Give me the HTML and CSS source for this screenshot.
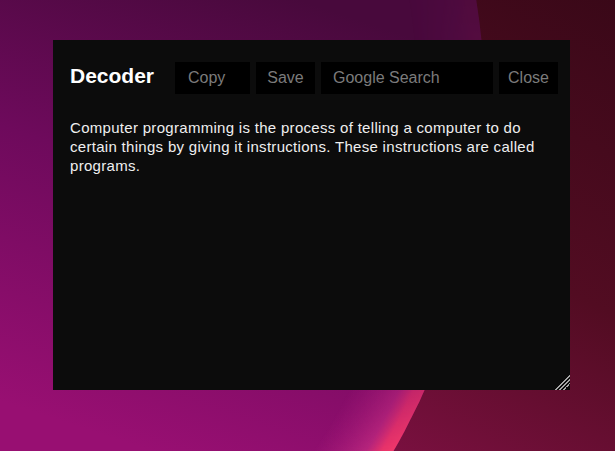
FILE: index.html
```html
<!DOCTYPE html>
<html lang="en">
<head>
<meta charset="utf-8">
<title>Decoder</title>
<link rel="stylesheet" href="styles.css">
</head>
<body>
<svg class="wallpaper" viewBox="0 0 615 451" preserveAspectRatio="none" aria-hidden="true">
  <defs>
    <linearGradient id="redBg" x1="615" y1="0" x2="380" y2="451" gradientUnits="userSpaceOnUse">
      <stop offset="0" stop-color="#3a0818"/>
      <stop offset="0.55" stop-color="#520c22"/>
      <stop offset="1" stop-color="#7a1040"/>
    </linearGradient>
    <linearGradient id="purpleBg" x1="300" y1="0" x2="150" y2="451" gradientUnits="userSpaceOnUse">
      <stop offset="0" stop-color="#48093c"/>
      <stop offset="0.45" stop-color="#6e0a5c"/>
      <stop offset="1" stop-color="#980f72"/>
    </linearGradient>
    <radialGradient id="edgeGlow" cx="-200" cy="109" r="685" gradientUnits="userSpaceOnUse">
      <stop offset="0.9" stop-color="#b02080" stop-opacity="0"/>
      <stop offset="0.965" stop-color="#c02a80" stop-opacity="0.8"/>
      <stop offset="0.985" stop-color="#e8336a" stop-opacity="1"/>
      <stop offset="1" stop-color="#f0386a" stop-opacity="1"/>
    </radialGradient>
    <linearGradient id="fadeY" x1="0" y1="0" x2="0" y2="451" gradientUnits="userSpaceOnUse">
      <stop offset="0" stop-color="#fff" stop-opacity="0.05"/>
      <stop offset="0.7" stop-color="#fff" stop-opacity="0.2"/>
      <stop offset="1" stop-color="#fff" stop-opacity="1"/>
    </linearGradient>
    <mask id="fadeMask" maskUnits="userSpaceOnUse" x="0" y="0" width="615" height="451">
      <rect x="0" y="0" width="615" height="451" fill="url(#fadeY)"/>
    </mask>
  </defs>
  <rect x="0" y="0" width="615" height="451" fill="url(#redBg)"/>
  <circle cx="-200" cy="109" r="685" fill="url(#purpleBg)"/>
  <circle cx="-200" cy="109" r="685" fill="url(#edgeGlow)" mask="url(#fadeMask)"/>
</svg>

<main class="decoder">
  <header class="decoder-head">
    <h1 class="decoder-title">Decoder</h1>
    <div class="actions">
      <button class="btn btn-copy" type="button">Copy</button>
      <button class="btn btn-save" type="button">Save</button>
      <input class="search" type="text" placeholder="Google Search">
      <button class="btn btn-close" type="button">Close</button>
    </div>
  </header>
  <textarea class="decoder-text" spellcheck="false">Computer programming is the process of telling a computer to do certain things by giving it instructions. These instructions are called programs.</textarea>
</main>
</body>
</html>
```

FILE: styles.css
```css
html, body {
  margin: 0;
  height: 100%;
}

body {
  position: relative;
  overflow: hidden;
  background: #3a0818;
  padding: 40px 0 0 53px;
  box-sizing: border-box;
  font-family: "Century Gothic", "Liberation Sans", Arial, sans-serif;
}

.wallpaper {
  position: absolute;
  left: 0;
  top: 0;
  width: 100%;
  height: 100%;
  z-index: 0;
}

.decoder {
  position: relative;
  z-index: 1;
  width: 517px;
  height: 350px;
  background: #0c0c0c;
  display: flex;
  flex-direction: column;
}

.decoder-head {
  display: flex;
  align-items: center;
  padding: 22px 12px 0 17px;
  height: 32px;
}

.decoder-title {
  margin: 0;
  font-size: 21px;
  font-weight: bold;
  color: #ffffff;
  width: 105px;
  line-height: 32px;
  position: relative;
  top: -2px;
}

.actions {
  display: flex;
  gap: 6px;
  height: 32px;
}

.btn,
.search {
  height: 32px;
  margin: 0;
  border: none;
  outline: none;
  background: #000000;
  color: #7b7b7b;
  font-family: inherit;
  font-size: 16px;
  box-sizing: border-box;
}

.btn-copy {
  width: 75px;
  text-align: left;
  padding: 0 0 0 13px;
}

.btn-save,
.btn-close {
  width: 59px;
  padding: 0;
  text-align: center;
}

.search {
  width: 172px;
  padding: 0 0 0 12px;
}

.search::placeholder {
  color: #7b7b7b;
  opacity: 1;
}

.decoder-text {
  flex: 1;
  margin: 7px 0 0;
  padding: 17px 17px 10px 17px;
  border: none;
  outline: none;
  background: #0c0c0c;
  color: #efefef;
  font-family: inherit;
  font-size: 15px;
  line-height: 19px;
  letter-spacing: 0.3px;
  resize: both;
}

.decoder-text::-webkit-resizer {
  background:
    linear-gradient(135deg,
      transparent 0 49%,
      #a8a8a8 49% 54%,
      transparent 54% 62%,
      #a8a8a8 62% 67%,
      transparent 67% 75%,
      #a8a8a8 75% 80%,
      transparent 80%);
}
```
